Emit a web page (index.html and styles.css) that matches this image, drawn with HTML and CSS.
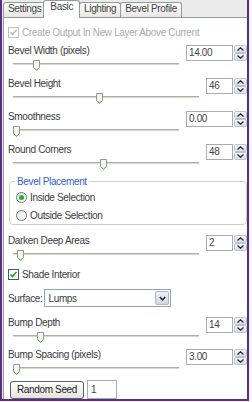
FILE: index.html
```html
<!DOCTYPE html>
<html lang="en">
<head>
    <meta charset="UTF-8">
    <meta name="viewport" content="width=device-width, initial-scale=1.0">
    <title>Bevel - Basic</title>
    <link rel="stylesheet" href="styles.css">
</head>
<body>
<div class="window">
    <div class="tabs">
        <div class="tab">Settings</div>
        <div class="tab active">Basic</div>
        <div class="tab">Lighting</div>
        <div class="tab">Bevel Profile</div>
    </div>
    <div class="panel">
        <div class="check disabled first">
            <span class="box"><svg width="9" height="9" viewBox="0 0 9 9"><path d="M1.5 4.5 L3.5 6.5 L7.5 2" fill="none" stroke="#b8b8b0" stroke-width="1.5"/></svg></span>
            Create Output In New Layer Above Current
        </div>

        <div class="field f-first">
            <div class="label">Bevel Width (pixels)</div>
            <div class="slider"><div class="track"></div><svg class="thumb" style="left:20px" width="7" height="11" viewBox="0 0 7 11"><path d="M0.5 0.5 H6.5 V7.5 L3.5 10.5 L0.5 7.5 Z" fill="#f6f6f3" stroke="#8f9a8c"/><path d="M1 8 L3.5 10 L6 8" fill="none" stroke="#4cbf4c"/></svg></div>
            <div class="spin"><div class="value wide">14.00</div><div class="arrows"><span><svg width="7" height="4" viewBox="0 0 7 4"><path d="M0.5 3.5 L3.5 0.8 L6.5 3.5" fill="none" stroke="#2b2b2b" stroke-width="1.3"/></svg></span><span><svg width="7" height="4" viewBox="0 0 7 4"><path d="M0.5 0.5 L3.5 3.2 L6.5 0.5" fill="none" stroke="#2b2b2b" stroke-width="1.3"/></svg></span></div></div>
        </div>

        <div class="field">
            <div class="label">Bevel Height</div>
            <div class="slider"><div class="track"></div><svg class="thumb" style="left:83px" width="7" height="11" viewBox="0 0 7 11"><path d="M0.5 0.5 H6.5 V7.5 L3.5 10.5 L0.5 7.5 Z" fill="#f6f6f3" stroke="#8f9a8c"/><path d="M1 8 L3.5 10 L6 8" fill="none" stroke="#4cbf4c"/></svg></div>
            <div class="spin"><div class="value">46</div><div class="arrows"><span><svg width="7" height="4" viewBox="0 0 7 4"><path d="M0.5 3.5 L3.5 0.8 L6.5 3.5" fill="none" stroke="#2b2b2b" stroke-width="1.3"/></svg></span><span><svg width="7" height="4" viewBox="0 0 7 4"><path d="M0.5 0.5 L3.5 3.2 L6.5 0.5" fill="none" stroke="#2b2b2b" stroke-width="1.3"/></svg></span></div></div>
        </div>

        <div class="field">
            <div class="label">Smoothness</div>
            <div class="slider"><div class="track"></div><svg class="thumb" style="left:0px" width="7" height="11" viewBox="0 0 7 11"><path d="M0.5 0.5 H6.5 V7.5 L3.5 10.5 L0.5 7.5 Z" fill="#f6f6f3" stroke="#8f9a8c"/><path d="M1 8 L3.5 10 L6 8" fill="none" stroke="#4cbf4c"/></svg></div>
            <div class="spin"><div class="value wide">0.00</div><div class="arrows"><span><svg width="7" height="4" viewBox="0 0 7 4"><path d="M0.5 3.5 L3.5 0.8 L6.5 3.5" fill="none" stroke="#2b2b2b" stroke-width="1.3"/></svg></span><span><svg width="7" height="4" viewBox="0 0 7 4"><path d="M0.5 0.5 L3.5 3.2 L6.5 0.5" fill="none" stroke="#2b2b2b" stroke-width="1.3"/></svg></span></div></div>
        </div>

        <div class="field">
            <div class="label">Round Corners</div>
            <div class="slider"><div class="track"></div><svg class="thumb" style="left:87px" width="7" height="11" viewBox="0 0 7 11"><path d="M0.5 0.5 H6.5 V7.5 L3.5 10.5 L0.5 7.5 Z" fill="#f6f6f3" stroke="#8f9a8c"/><path d="M1 8 L3.5 10 L6 8" fill="none" stroke="#4cbf4c"/></svg></div>
            <div class="spin"><div class="value">48</div><div class="arrows"><span><svg width="7" height="4" viewBox="0 0 7 4"><path d="M0.5 3.5 L3.5 0.8 L6.5 3.5" fill="none" stroke="#2b2b2b" stroke-width="1.3"/></svg></span><span><svg width="7" height="4" viewBox="0 0 7 4"><path d="M0.5 0.5 L3.5 3.2 L6.5 0.5" fill="none" stroke="#2b2b2b" stroke-width="1.3"/></svg></span></div></div>
        </div>

        <fieldset class="group">
            <legend>Bevel Placement</legend>
            <div class="radio"><span class="dot on"></span>Inside Selection</div>
            <div class="radio"><span class="dot"></span>Outside Selection</div>
        </fieldset>

        <div class="field f-darken">
            <div class="label">Darken Deep Areas</div>
            <div class="slider"><div class="track"></div><svg class="thumb" style="left:4px" width="7" height="11" viewBox="0 0 7 11"><path d="M0.5 0.5 H6.5 V7.5 L3.5 10.5 L0.5 7.5 Z" fill="#f6f6f3" stroke="#8f9a8c"/><path d="M1 8 L3.5 10 L6 8" fill="none" stroke="#4cbf4c"/></svg></div>
            <div class="spin"><div class="value">2</div><div class="arrows"><span><svg width="7" height="4" viewBox="0 0 7 4"><path d="M0.5 3.5 L3.5 0.8 L6.5 3.5" fill="none" stroke="#2b2b2b" stroke-width="1.3"/></svg></span><span><svg width="7" height="4" viewBox="0 0 7 4"><path d="M0.5 0.5 L3.5 3.2 L6.5 0.5" fill="none" stroke="#2b2b2b" stroke-width="1.3"/></svg></span></div></div>
        </div>

        <div class="check shade">
            <span class="box"><svg width="9" height="9" viewBox="0 0 9 9"><path d="M1.5 4.5 L3.5 6.5 L7.5 2" fill="none" stroke="#21a121" stroke-width="1.6"/></svg></span>
            Shade Interior
        </div>

        <div class="select-row">
            <span>Surface:</span>
            <div class="select">
                <span class="text">Lumps</span>
                <span class="drop"><svg width="7" height="5" viewBox="0 0 7 5"><path d="M0.8 1 L3.5 3.8 L6.2 1" fill="none" stroke="#2b2b2b" stroke-width="1.5"/></svg></span>
            </div>
        </div>

        <div class="field f-bump">
            <div class="label">Bump Depth</div>
            <div class="slider"><div class="track"></div><svg class="thumb" style="left:24px" width="7" height="11" viewBox="0 0 7 11"><path d="M0.5 0.5 H6.5 V7.5 L3.5 10.5 L0.5 7.5 Z" fill="#f6f6f3" stroke="#8f9a8c"/><path d="M1 8 L3.5 10 L6 8" fill="none" stroke="#4cbf4c"/></svg></div>
            <div class="spin"><div class="value">14</div><div class="arrows"><span><svg width="7" height="4" viewBox="0 0 7 4"><path d="M0.5 3.5 L3.5 0.8 L6.5 3.5" fill="none" stroke="#2b2b2b" stroke-width="1.3"/></svg></span><span><svg width="7" height="4" viewBox="0 0 7 4"><path d="M0.5 0.5 L3.5 3.2 L6.5 0.5" fill="none" stroke="#2b2b2b" stroke-width="1.3"/></svg></span></div></div>
        </div>

        <div class="field f-spacing">
            <div class="label">Bump Spacing (pixels)</div>
            <div class="slider"><div class="track"></div><svg class="thumb" style="left:0px" width="7" height="11" viewBox="0 0 7 11"><path d="M0.5 0.5 H6.5 V7.5 L3.5 10.5 L0.5 7.5 Z" fill="#f6f6f3" stroke="#8f9a8c"/><path d="M1 8 L3.5 10 L6 8" fill="none" stroke="#4cbf4c"/></svg></div>
            <div class="spin"><div class="value wide">3.00</div><div class="arrows"><span><svg width="7" height="4" viewBox="0 0 7 4"><path d="M0.5 3.5 L3.5 0.8 L6.5 3.5" fill="none" stroke="#2b2b2b" stroke-width="1.3"/></svg></span><span><svg width="7" height="4" viewBox="0 0 7 4"><path d="M0.5 0.5 L3.5 3.2 L6.5 0.5" fill="none" stroke="#2b2b2b" stroke-width="1.3"/></svg></span></div></div>
        </div>

        <div class="seed-row">
            <button class="seed">Random Seed</button>
            <div class="seed-value">1</div>
        </div>
    </div>
</div>
</body>
</html>
```

FILE: styles.css
```css
body {
    margin: 0;
    background: #f4f4f4;
    font-family: "Liberation Sans", Arial, sans-serif;
    font-size: 10px;
    letter-spacing: -0.35px;
    color: #3c3c3c;
}
.window {
    width: 245px;
    height: 399px;
    border: 2px solid #5b2c83;
    border-top: none;
    background: #ebebeb;
    overflow: hidden;
    display: flex;
    flex-direction: column;
}
.tabs {
    display: flex;
    align-items: flex-end;
    height: 17px;
    padding-left: 1px;
    flex-shrink: 0;
}
.tab {
    height: 14px;
    line-height: 12px;
    padding: 0 4px;
    border: 1px solid #919b9c;
    border-bottom: none;
    border-radius: 3px 3px 0 0;
    background: linear-gradient(#fdfdfd, #e8e7e2);
    color: #444;
    margin-right: -1px;
}
.tab.active {
    position: relative;
    z-index: 1;
    height: 17px;
    padding: 0 6px;
    margin: 0 -1px -1px -2px;
    background: #fff;
}
.panel {
    flex: 1;
    margin-left: 1px;
    border-top: 1px solid #919b9c;
    border-left: 1px solid #919b9c;
    background: #fff;
    padding-left: 4px;
}

/* casillas */
.check {
    display: flex;
    align-items: center;
    gap: 3px;
    height: 13px;
}
.check.first {
    margin-top: 8px;
}
.check.shade {
    margin-top: 7px;
}
.check .box {
    width: 11px;
    height: 11px;
    box-sizing: border-box;
    border: 1px solid #3d5a7a;
    background: #fff;
    display: flex;
    align-items: center;
    justify-content: center;
}
.check.disabled {
    color: #acacac;
}
.check.disabled .box {
    border-color: #c4c4bc;
}

/* filas con deslizador y caja numerica */
.field {
    display: grid;
    grid-template-columns: 1fr auto;
    grid-template-rows: 13px 14px;
    column-gap: 7px;
    margin-top: 6px;
}
.field.f-first {
    margin-top: 5px;
}
.field.f-darken {
    margin-top: 9px;
}
.field.f-bump {
    margin-top: 9px;
}
.field.f-spacing {
    margin-top: 5px;
}
.label {
    grid-column: 1;
    grid-row: 1;
    line-height: 13px;
}
.slider {
    grid-column: 1;
    grid-row: 2;
    position: relative;
    margin-left: 5px;
}
.track {
    margin-top: 6px;
    height: 3px;
    box-sizing: border-box;
    border-top: 1px solid #b0b0a2;
    border-bottom: 1px solid #fbfbf8;
    background: #d8d8cc;
}
.thumb {
    position: absolute;
    top: 3px;
}
.spin {
    grid-column: 2;
    grid-row: 1 / 3;
    display: flex;
    height: 16px;
    margin-top: 1px;
}
.spin .value {
    width: 27px;
    box-sizing: border-box;
    border: 1px solid #a5acb5;
    padding-left: 2px;
    line-height: 14px;
    color: #444;
}
.spin .value.wide {
    width: 47px;
}
.arrows {
    width: 13px;
    margin-left: 1px;
    display: flex;
    flex-direction: column;
}
.arrows span {
    flex: 1;
    border: 1px solid #b9c3d3;
    border-radius: 2px;
    background: linear-gradient(#f4f6fa, #d9dfea);
    display: flex;
    align-items: center;
    justify-content: center;
}

/* grupo de colocacion */
.group {
    margin: 5px 0 0 1px;
    padding: 0 0 0 6px;
    border: 1px solid #d0d0bf;
    border-radius: 4px;
    min-width: 0;
}
.group legend {
    padding: 0 2px;
    margin-left: -1px;
    line-height: 13px;
    color: #2f5fd6;
}
.radio {
    display: flex;
    align-items: center;
    gap: 3px;
    height: 18px;
}
.dot {
    width: 11px;
    height: 11px;
    box-sizing: border-box;
    border: 1px solid #5f7a98;
    border-radius: 50%;
    background: linear-gradient(135deg, #e4e4de, #fff);
    display: flex;
    align-items: center;
    justify-content: center;
}
.dot.on::after {
    content: "";
    width: 5px;
    height: 5px;
    border-radius: 50%;
    background: #2cae2c;
}

/* desplegable */
.select-row {
    display: flex;
    align-items: center;
    gap: 2px;
    height: 18px;
    margin-top: 8px;
}
.select {
    width: 127px;
    height: 18px;
    box-sizing: border-box;
    border: 1px solid #8ea3bd;
    display: flex;
    align-items: center;
    justify-content: space-between;
    padding: 1px;
}
.select .text {
    padding-left: 2px;
}
.drop {
    width: 14px;
    height: 14px;
    box-sizing: border-box;
    border: 1px solid #aeb9cf;
    border-radius: 2px;
    background: linear-gradient(#eef1f7, #cdd6e6);
    display: flex;
    align-items: center;
    justify-content: center;
}

/* semilla */
.seed-row {
    display: flex;
    align-items: center;
    gap: 3px;
    margin-top: 5px;
    height: 19px;
}
.seed {
    margin-left: 2px;
    width: 74px;
    height: 18px;
    padding: 0;
    border: 1px solid #5a626c;
    border-radius: 3px;
    background: linear-gradient(#ffffff, #e4e4de);
    font-family: inherit;
    font-size: 10px;
    letter-spacing: -0.35px;
    color: #222;
}
.seed-value {
    width: 30px;
    height: 19px;
    box-sizing: border-box;
    border: 1px solid #a5acb5;
    padding-left: 3px;
    line-height: 17px;
}
```
